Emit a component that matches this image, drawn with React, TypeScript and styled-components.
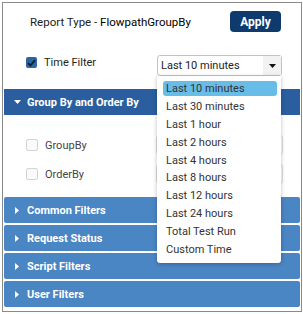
import styled, { createGlobalStyle } from 'styled-components';

const GlobalStyle = createGlobalStyle`
  body {
    margin: 0;
    font-family: Roboto, 'Liberation Sans', sans-serif;
    background: #fff;
  }
`;

const timeOptions = [
  'Last 10 minutes',
  'Last 30 minutes',
  'Last 1 hour',
  'Last 2 hours',
  'Last 4 hours',
  'Last 8 hours',
  'Last 12 hours',
  'Last 24 hours',
  'Total Test Run',
  'Custom Time',
];

const filterSections = ['Common Filters', 'Request Status', 'Script Filters', 'User Filters'];

const CaretDown = ({ color }: { color: string }) => (
  <svg width="7" height="4" viewBox="0 0 7 4">
    <path d="M0 0 L7 0 L3.5 4 Z" fill={color} />
  </svg>
);

const CaretRight = () => (
  <svg width="4" height="7" viewBox="0 0 4 7">
    <path d="M0 0 L4 3.5 L0 7 Z" fill="#fff" />
  </svg>
);

const App = () => {
  return (
    <>
      <GlobalStyle />
      <Panel>
        <TopRow>
          <ReportTitle>
            Report Type - <strong>FlowpathGroupBy</strong>
          </ReportTitle>
          <ApplyBtn>Apply</ApplyBtn>
        </TopRow>

        <TimeRow>
          <CheckLabel $raised>
            <CheckedBox>
              <svg width="9" height="8" viewBox="0 0 9 8">
                <path d="M1 4 L3.5 6.5 L8 1.2" stroke="#111a2a" strokeWidth="1.8" fill="none" />
              </svg>
            </CheckedBox>
            Time Filter
          </CheckLabel>
          <SelectWrap>
            <SelectBox>
              <span>Last 10 minutes</span>
              <ArrowArea>
                <CaretDown color="#111" />
              </ArrowArea>
            </SelectBox>
            <OptionList>
              {timeOptions.map((opt, i) => (
                <Option key={opt} $active={i === 0}>
                  {opt}
                </Option>
              ))}
            </OptionList>
          </SelectWrap>
        </TimeRow>

        <SectionHeader $open>
          <CaretDown color="#fff" />
          Group By and Order By
        </SectionHeader>
        <GroupBody>
          <FieldRow>
            <CheckLabel $muted>
              <EmptyBox />
              GroupBy
            </CheckLabel>
            <GhostInput />
          </FieldRow>
          <FieldRow>
            <CheckLabel $muted>
              <EmptyBox />
              OrderBy
            </CheckLabel>
            <GhostInput />
          </FieldRow>
        </GroupBody>

        <Sections>
          {filterSections.map((s) => (
            <SectionHeader key={s}>
              <CaretRight />
              {s}
            </SectionHeader>
          ))}
        </Sections>
      </Panel>
    </>
  );
};

const Panel = styled.div`
  margin: 2px;
  width: 300px;
  height: 310px;
  box-sizing: border-box;
  border: 1px solid #8a8a8a;
  padding: 0 1px;
  display: flex;
  flex-direction: column;
`;

const TopRow = styled.div`
  display: flex;
  align-items: center;
  justify-content: space-between;
  padding: 8px 19px 0 26px;
  height: 21px;
`;

const ReportTitle = styled.div`
  font-size: 11.5px;
  color: #222;
  strong {
    font-weight: 400;
    color: #000;
  }
`;

const ApplyBtn = styled.button`
  background: #0e3a6e;
  color: #fff;
  border: none;
  border-radius: 4px;
  width: 51px;
  height: 21px;
  font-family: Roboto, 'Liberation Sans', sans-serif;
  font-size: 12px;
  font-weight: 700;
  padding: 0;
`;

const TimeRow = styled.div`
  display: flex;
  align-items: flex-start;
  justify-content: space-between;
  padding: 23px 18px 0 22px;
  height: 21px;
  margin-bottom: 13px;
`;

const CheckLabel = styled.label<{ $muted?: boolean; $raised?: boolean }>`
  display: flex;
  align-items: center;
  gap: 7px;
  height: 13px;
  margin-top: ${(p) => (p.$raised ? '1px' : '0')};
  font-size: 11px;
  color: ${(p) => (p.$muted ? '#444' : '#222')};
`;

const CheckedBox = styled.span`
  width: 11px;
  height: 11px;
  border-radius: 2px;
  background: #2a66a6;
  display: flex;
  align-items: center;
  justify-content: center;
`;

const EmptyBox = styled.span`
  width: 10px;
  height: 10px;
  border-radius: 2px;
  border: 1px solid #d4d4d4;
  background: #fafafa;
`;

const SelectWrap = styled.div`
  position: relative;
  width: 125px;
`;

const SelectBox = styled.div`
  height: 21px;
  box-sizing: border-box;
  border: 1px solid #a9c9ea;
  border-radius: 3px;
  display: flex;
  align-items: center;
  justify-content: space-between;
  padding-left: 3px;
  font-size: 11px;
  color: #222;
  background: #fff;
`;

const ArrowArea = styled.div`
  width: 18px;
  height: 100%;
  background: #f2f2f2;
  display: flex;
  align-items: center;
  justify-content: center;
`;

const OptionList = styled.div`
  position: absolute;
  top: 21px;
  left: 0;
  width: 124px;
  box-sizing: border-box;
  background: #fff;
  padding: 5px 4px 6px 6px;
  border-radius: 0 0 3px 3px;
  box-shadow: 0 1px 4px rgba(0, 0, 0, 0.25);
  z-index: 5;
  display: flex;
  flex-direction: column;
  gap: 2.9px;
`;

const Option = styled.div<{ $active?: boolean }>`
  height: 15px;
  line-height: 15px;
  padding-left: 3px;
  border-radius: 3px;
  font-size: 11px;
  color: #333;
  background: ${(p) => (p.$active ? '#67bde7' : 'transparent')};
`;

const SectionHeader = styled.div<{ $open?: boolean }>`
  display: flex;
  align-items: center;
  gap: ${(p) => (p.$open ? '6px' : '8px')};
  height: 26px;
  padding-left: ${(p) => (p.$open ? '10px' : '11px')};
  background: ${(p) => (p.$open ? '#2a5e9f' : '#4a85c4')};
  color: #fff;
  font-size: 11px;
  font-weight: 700;
  border-radius: ${(p) => (p.$open ? '0' : '2px')};
`;

const GroupBody = styled.div`
  display: flex;
  flex-direction: column;
  gap: 9px;
  padding: 20px 17px 13px 22px;
`;

const FieldRow = styled.div`
  display: flex;
  align-items: center;
  justify-content: space-between;
  height: 20px;
`;

const GhostInput = styled.div`
  width: 125px;
  height: 18px;
  border: 1px solid #ddd;
  border-radius: 3px;
`;

const Sections = styled.div`
  display: flex;
  flex-direction: column;
  gap: 2px;
`;

export default App;
